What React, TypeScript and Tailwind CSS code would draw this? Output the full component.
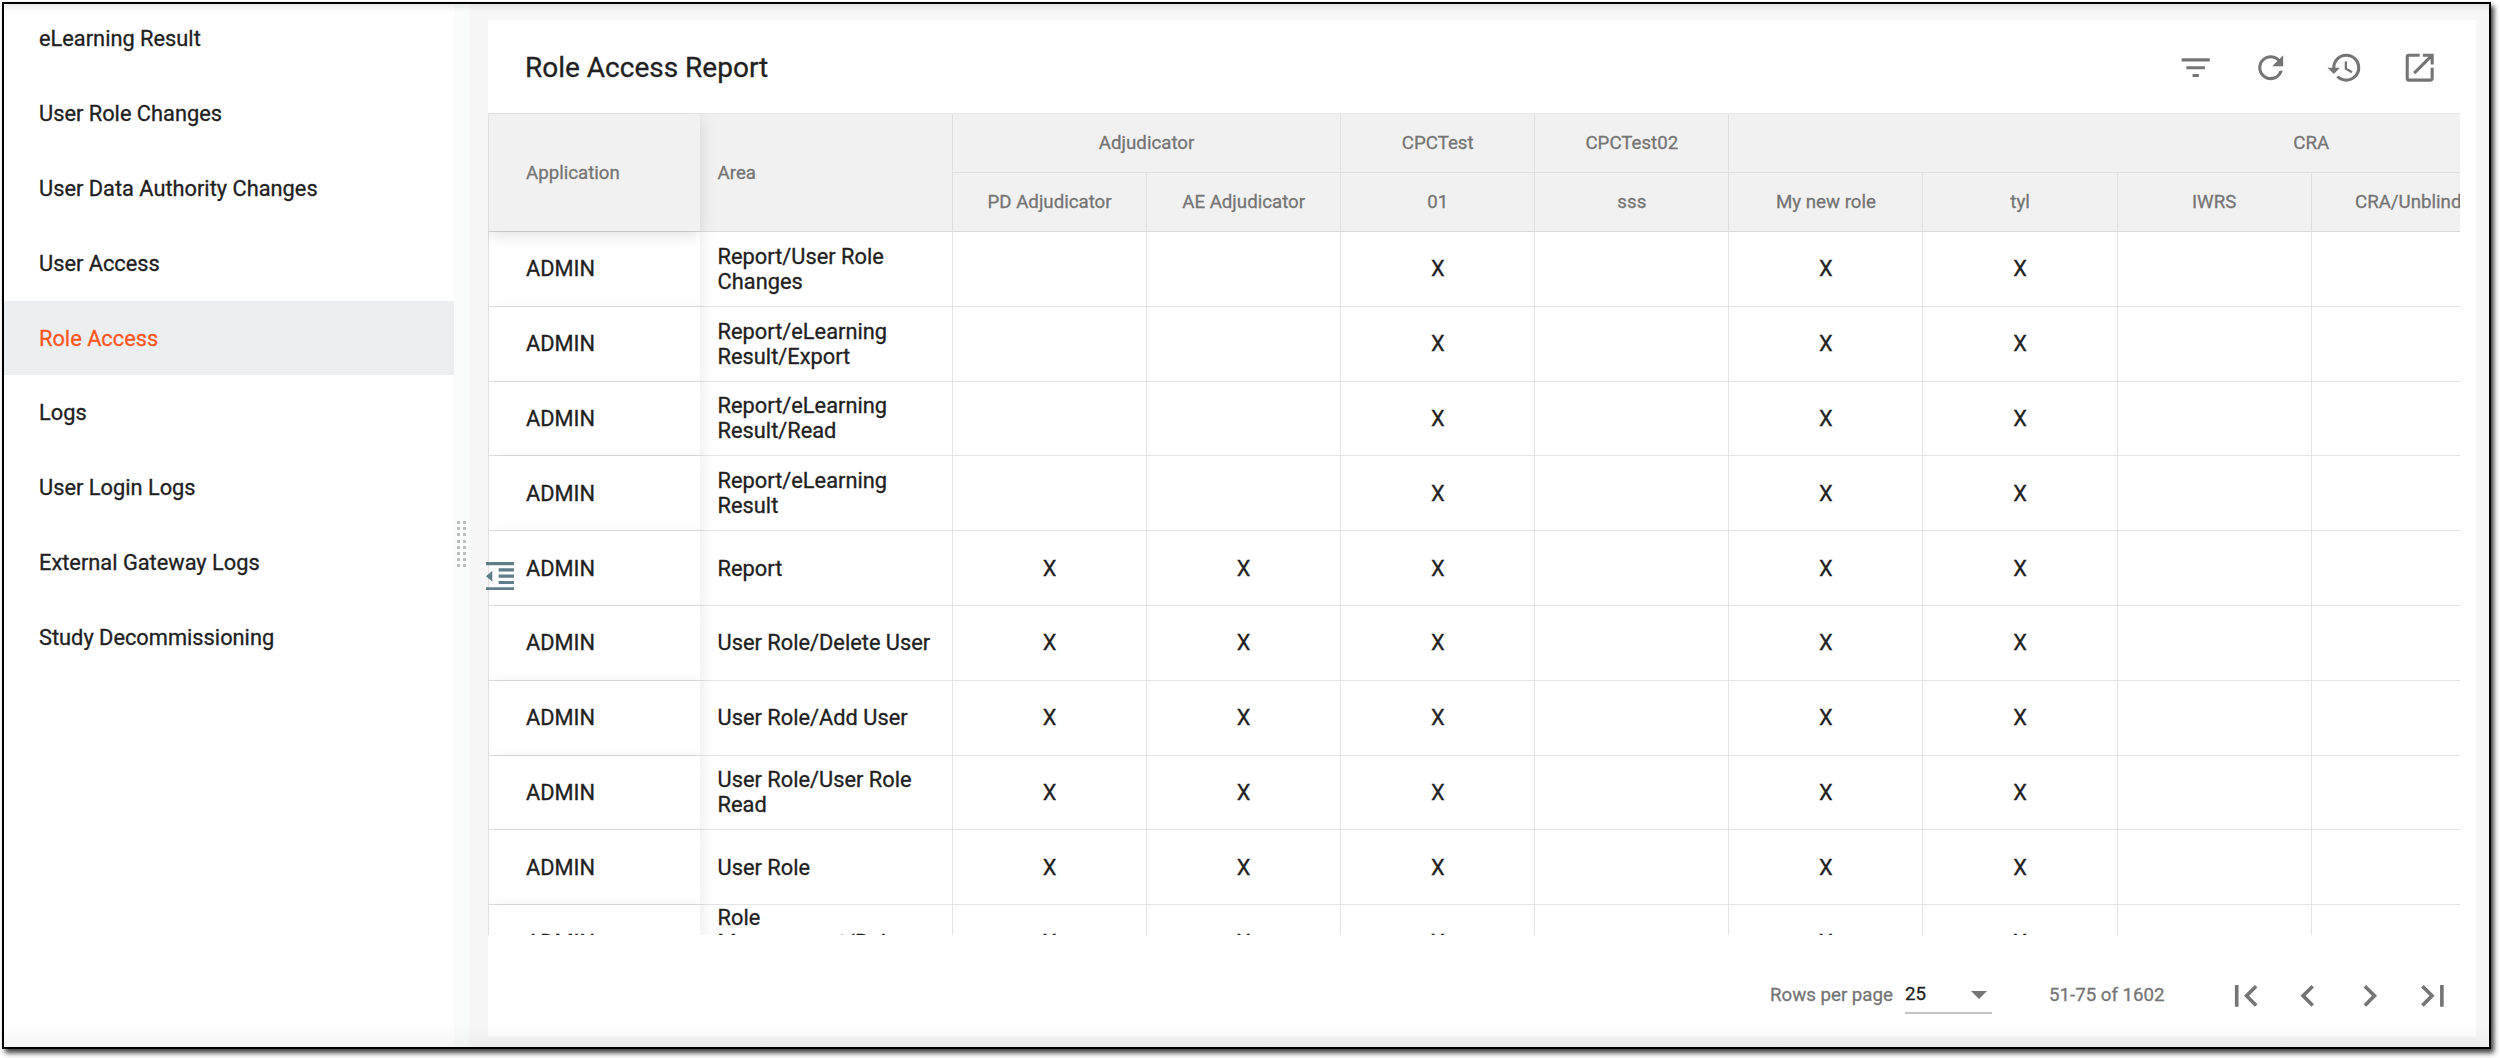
import React from 'react';
import { MdFilterList, MdRefresh, MdHistory, MdChevronLeft, MdChevronRight, MdFirstPage, MdLastPage } from 'react-icons/md';

interface ReportRow {
  application: string;
  area: string;
  access: boolean[];
}

const navItems = [
  'eLearning Result',
  'User Role Changes',
  'User Data Authority Changes',
  'User Access',
  'Role Access',
  'Logs',
  'User Login Logs',
  'External Gateway Logs',
  'Study Decommissioning',
];

const roles = ['PD Adjudicator', 'AE Adjudicator', '01', 'sss', 'My new role', 'tyl', 'IWRS', 'CRA/Unblind'];

const limited = [false, false, true, false, true, true, false, false];
const full = [true, true, true, false, true, true, false, false];

const rows: ReportRow[] = [
  { application: 'ADMIN', area: 'Report/User Role Changes', access: limited },
  { application: 'ADMIN', area: 'Report/eLearning Result/Export', access: limited },
  { application: 'ADMIN', area: 'Report/eLearning Result/Read', access: limited },
  { application: 'ADMIN', area: 'Report/eLearning Result', access: limited },
  { application: 'ADMIN', area: 'Report', access: full },
  { application: 'ADMIN', area: 'User Role/Delete User', access: full },
  { application: 'ADMIN', area: 'User Role/Add User', access: full },
  { application: 'ADMIN', area: 'User Role/User Role Read', access: full },
  { application: 'ADMIN', area: 'User Role', access: full },
  { application: 'ADMIN', area: 'Role Management/Role Read', access: full },
];

const OpenIcon = () => (
  <svg viewBox="0 0 24 24" fill="currentColor" className="size-[37.4px]">
    <path d="M19 19H5V5h7V3H5a2 2 0 0 0-2 2v14a2 2 0 0 0 2 2h14c1.100 0 2-.9 2-2v-7h-2v7zM14 3v2h3.590l-9.830 9.830 1.410 1.410L19 6.410V10h2V3h-7z" />
  </svg>
);

const CollapseIcon = () => (
  <svg viewBox="0 0 18 18" fill="currentColor" className="size-[28.4px]">
    <path d="M0 0h18v2H0zM8 4h10v2H8zM8 8h10v2H8zM8 12h10v2H8zM0 16h18v2H0zM4 5.500v7L0 9z" />
  </svg>
);

const Sidebar = () => (
  <nav className="w-[450px] shrink-0 -mt-[3px]">
    {navItems.map((item) => (
      <div
        key={item}
        className={`h-[74.9px] pl-[35px] flex items-center ${
          item === 'Role Access' ? 'bg-[#edeef0] text-[#ff5722]' : 'text-[#212121]'
        }`}
      >
        {item}
      </div>
    ))}
  </nav>
);

const Splitter = () => (
  <div className="relative w-[15px] shrink-0 bg-[#fafcfb]">
    <div className="absolute left-[3px] top-[517px] grid grid-cols-2 gap-x-[3.2px] gap-y-[3.2px]">
      {Array.from({ length: 16 }).map((_, i) => (
        <span key={i} className="size-[3px] bg-[#bdbdbd]" />
      ))}
    </div>
  </div>
);

const HeaderCell = ({ children, className = '' }: { children?: React.ReactNode; className?: string }) => (
  <div className={`flex items-center justify-center border-[#e0e0e0] pt-px ${className}`}>{children}</div>
);

const TableHeader = () => (
  <div className="flex h-[119px] bg-[#f1f1f1] text-[18.7px] text-[#757575] border-t border-b border-t-[#e8e8e8] border-b-[#dadada]">
    <div className="relative z-10 w-[212px] shrink-0 flex items-center pt-[2px] pl-[37px] border-l border-[#e0e0e0] bg-[#f1f1f1] shadow-[0_3px_16px_rgba(0,0,0,0.13)]">
      Application
    </div>
    <div className="w-[252px] shrink-0 flex items-center pt-[2px] pl-[17.6px]">Area</div>
    <div className="shrink-0">
      <div className="flex h-[58.5px] border-b border-[#dedede]">
        <HeaderCell className="w-[388.2px] border-l">Adjudicator</HeaderCell>
        <HeaderCell className="w-[194.1px] border-l">CPCTest</HeaderCell>
        <HeaderCell className="w-[194.1px] border-l">CPCTest02</HeaderCell>
        <HeaderCell className="w-[1164.6px] border-l">CRA</HeaderCell>
      </div>
      <div className="flex h-[58.5px]">
        {roles.map((role) => (
          <HeaderCell key={role} className="w-[194.1px] border-l">{role}</HeaderCell>
        ))}
      </div>
    </div>
  </div>
);

const TableRow = ({ row }: { row: ReportRow }) => (
  <div className="flex h-[74.8px] w-max border-b border-[#e4e4e4]">
    <div className="w-[212px] shrink-0 flex items-center pl-[37px] border-l border-[#e0e0e0] bg-white shadow-[4px_2px_14px_rgba(0,0,0,0.07)]">
      {row.application}
    </div>
    <div className="w-[252px] shrink-0 flex items-center pl-[17.6px] pr-[16px] leading-[25px]">{row.area}</div>
    {row.access.map((allowed, i) => (
      <div key={i} className="w-[194.1px] shrink-0 flex items-center justify-center border-l border-[#e4e4e4]">
        {allowed ? 'X' : ''}
      </div>
    ))}
  </div>
);

const Pagination = () => (
  <div className="flex items-center h-[102px] pt-[19px] pl-[1282px] text-[18.7px] text-[#757575]">
    <span className="w-[135px] shrink-0">Rows per page</span>
    <div className="w-[87px] h-[37px] shrink-0 flex items-center justify-between pr-[5px] border-b-2 border-[#c4c4c4] text-[#212121]">
      <span>25</span>
      <svg viewBox="0 0 16 8" className="w-[16px] h-[8px] fill-[#757575]">
        <path d="M0 0h16L8 8z" />
      </svg>
    </div>
    <span className="w-[153px] shrink-0 ml-[57px]">51-75 of 1602</span>
    <div className="flex items-center gap-[18.6px] pl-[22px]">
      <MdFirstPage className="size-[43.6px]" />
      <MdChevronLeft className="size-[43.6px]" />
      <MdChevronRight className="size-[43.6px]" />
      <MdLastPage className="size-[43.6px]" />
    </div>
  </div>
);

const App: React.FC = () => {
  return (
    <div className="h-[1058px] w-[2500px] overflow-hidden bg-white pl-[2px] pt-[2px] font-[Roboto,sans-serif] text-[21.8px] leading-[25px] text-[#212121] [-webkit-text-stroke:0.3px]">
      <div className="relative flex w-[2489px] h-[1047px] border-2 border-black bg-white shadow-[3px_4px_5px_rgba(0,0,0,0.75)]">
        <div className="flex w-full h-full overflow-hidden">
          <Sidebar />
          <Splitter />
          <main className="flex-1 min-w-0 bg-[#f7f7f7] pl-[19px] pt-[16px] pr-[13px] pb-[10px]">
            <div className="relative h-full bg-white">
              <div className="flex items-center justify-between h-[93px] pt-[2px] pl-[37px] pr-[37.5px]">
                <h1 className="text-[28px] leading-[36px]">Role Access Report</h1>
                <div className="flex items-center gap-[37.4px] text-[#757575]">
                  <MdFilterList className="size-[37.4px]" />
                  <MdRefresh className="size-[37.4px]" />
                  <MdHistory className="size-[37.4px]" />
                  <OpenIcon />
                </div>
              </div>
              <div className="w-[1972px] h-[822px] overflow-hidden">
                <TableHeader />
                {rows.map((row) => (
                  <TableRow key={row.area} row={row} />
                ))}
              </div>
              <Pagination />
              {/* sidebar toggle */}
              <button className="absolute -left-[2px] top-[542px] text-[#607d8b]">
                <CollapseIcon />
              </button>
            </div>
          </main>
        </div>
        <div className="pointer-events-none absolute inset-x-0 top-0 h-[8px] bg-gradient-to-b from-black/8 to-transparent" />
        <div className="pointer-events-none absolute inset-x-0 bottom-0 h-[24px] bg-gradient-to-t from-black/4 to-transparent" />
      </div>
    </div>
  );
};

export default App;
